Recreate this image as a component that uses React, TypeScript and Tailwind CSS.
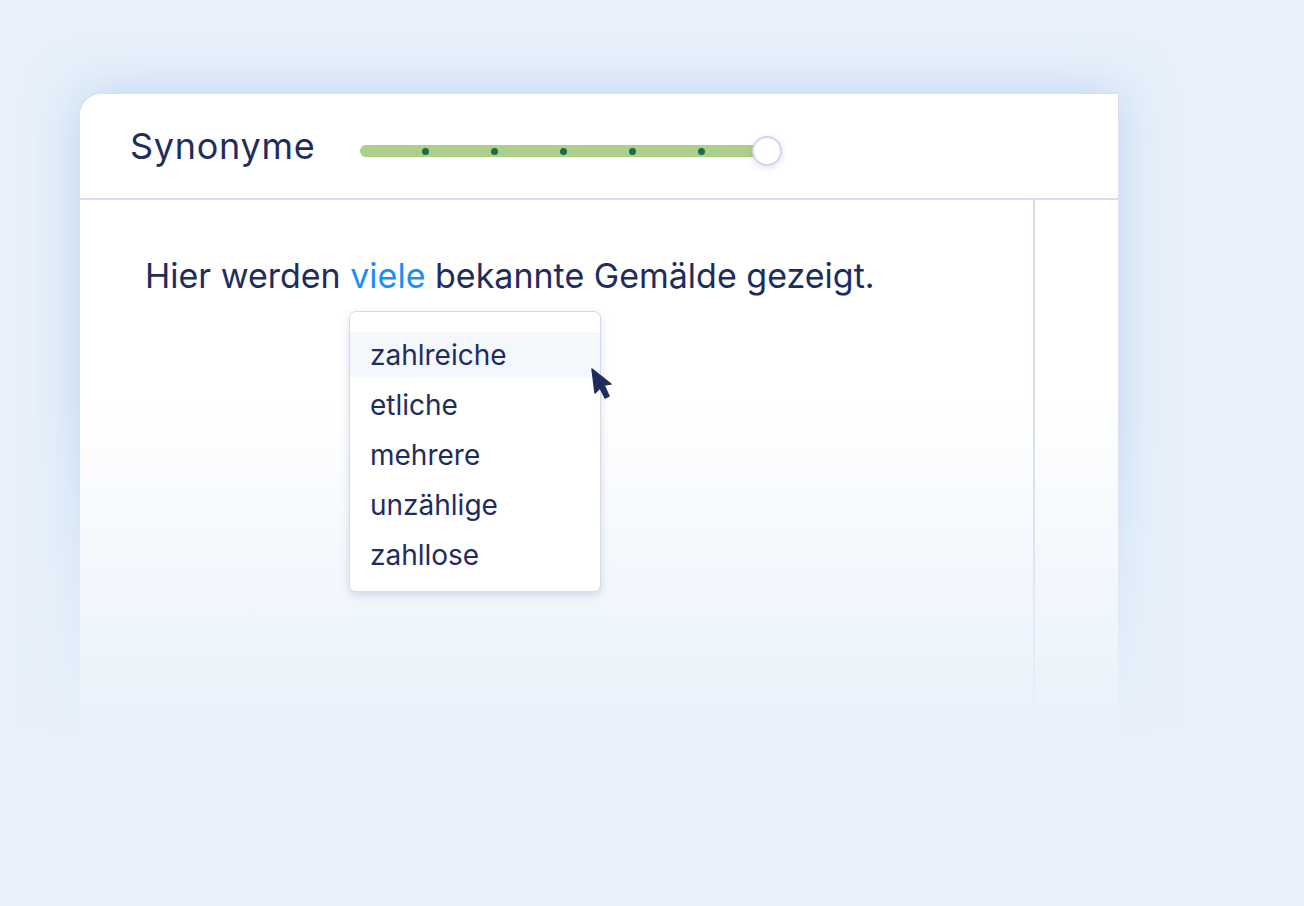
import React from 'react';

const synonyms = ['zahlreiche', 'etliche', 'mehrere', 'unzählige', 'zahllose'];

function Slider() {
  return (
    <div className="relative mt-[10px] flex h-[30px] w-[424px] items-center">
      <div className="flex h-[12px] w-[410px] items-center gap-[62px] rounded-full bg-[#acd08c] pl-[61.5px]">
        {[0, 1, 2, 3, 4].map((i) => (
          <span key={i} className="h-[7px] w-[7px] shrink-0 rounded-full bg-[#1f6a47]" />
        ))}
      </div>
      <div className="absolute left-[392px] top-0 h-[30px] w-[30px] rounded-full border-2 border-[#d3d6ee] bg-white shadow-[0_2px_6px_rgba(60,80,140,0.18)]" />
    </div>
  );
}

function Cursor() {
  return (
    <svg className="absolute left-[239px] top-[54px]" width="26" height="34" viewBox="0 0 26 34">
      <polygon
        points="3,3 6,27 11,22 16,32 20,30 15,19 22,18"
        fill="#1f2d5e"
        stroke="#1f2d5e"
        strokeWidth="1.5"
        strokeLinejoin="round"
      />
    </svg>
  );
}

export default function App() {
  return (
    <div
      className="relative h-[906px] w-full overflow-hidden bg-[#e8f1fb] pl-[79px] pt-[93px]"
      style={{ fontFamily: 'Inter, "Noto Sans", sans-serif' }}
    >
      <div className="relative h-[680px] w-[1040px] rounded-tl-[22px] border border-[#d9def0] bg-white shadow-[0_0_50px_rgba(150,185,230,0.55)]">
        <div className="flex h-[106px] items-center border-b-2 border-[#d9dbee] pl-[50px]">
          <h1 className="w-[230px] text-[36px] leading-none tracking-[0.02em] text-[#1f2d5e]">Synonyme</h1>
          <Slider />
        </div>
        <div className="flex h-[572px]">
          <div className="w-[955px] border-r-2 border-[#d9dbee] pl-[65px] pt-[54px]">
            <p className="text-[34px] leading-[44px] text-[#1f2d5e]">
              Hier werden <span className="text-[#1a8ff5]">viele</span> bekannte Gemälde gezeigt.
            </p>
            <div className="relative z-20 ml-[204px] mt-[13px] w-[252px] rounded-[7px] border border-[#d6daeb] bg-white pb-[14px] pt-[20px] shadow-[0_3px_8px_rgba(60,80,140,0.18)]">
              <ul className="flex flex-col gap-[5px]">
                {synonyms.map((s, i) => (
                  <li
                    key={s}
                    className={`flex h-[45px] items-center pl-[20px] text-[28px] text-[#1f2d5e] ${i === 0 ? 'bg-[#f4f8fd]' : ''}`}
                  >
                    {s}
                  </li>
                ))}
              </ul>
              <Cursor />
            </div>
          </div>
          <div className="flex-1" />
        </div>
      </div>
      <div className="pointer-events-none absolute left-0 right-0 top-[400px] z-10 h-[330px] bg-gradient-to-b from-[rgba(232,241,251,0)] to-[#e8f1fb]" />
      <div className="pointer-events-none absolute bottom-0 left-0 right-0 top-[729px] z-10 bg-[#e8f1fb]" />
    </div>
  );
}
